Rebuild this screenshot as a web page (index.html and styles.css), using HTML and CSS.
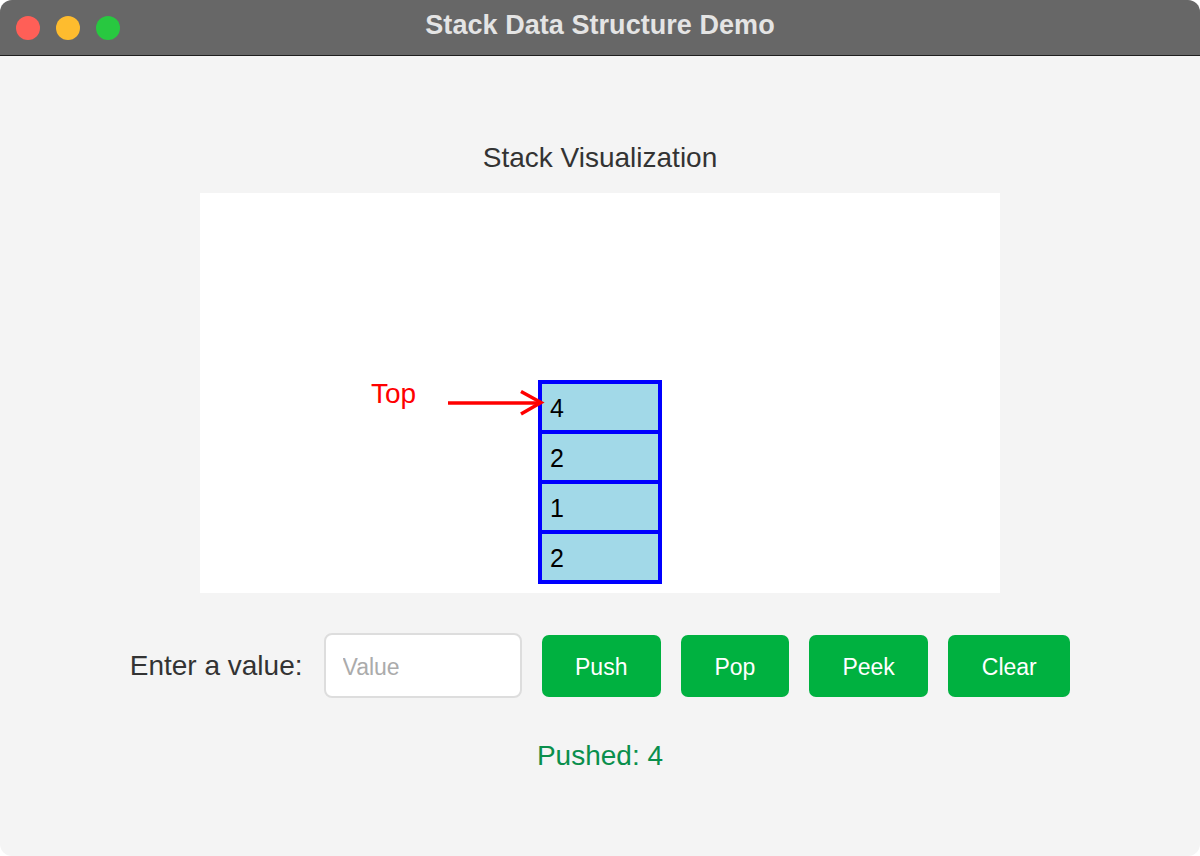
FILE: index.html
```html
<!DOCTYPE html>
<html lang="en">
<head>
<meta charset="utf-8">
<title>Stack Data Structure Demo</title>
<link rel="stylesheet" href="styles.css">
</head>
<body>
<div class="window">
  <header class="titlebar">
    <div class="lights">
      <span class="light light-red"></span>
      <span class="light light-yellow"></span>
      <span class="light light-green"></span>
    </div>
    <div class="window-title">Stack Data Structure Demo</div>
    <div></div>
  </header>
  <main class="content">
    <h1 class="viz-title">Stack Visualization</h1>
    <div class="canvas">
      <svg class="stack-svg" width="800" height="400" viewBox="0 0 800 400" xmlns="http://www.w3.org/2000/svg">
        <g class="cells">
          <rect x="340" y="189" width="120" height="50"/>
          <rect x="340" y="239" width="120" height="50"/>
          <rect x="340" y="289" width="120" height="50"/>
          <rect x="340" y="339" width="120" height="50"/>
        </g>
        <g class="cell-text">
          <text x="350" y="224">4</text>
          <text x="350" y="274">2</text>
          <text x="350" y="324">1</text>
          <text x="350" y="374">2</text>
        </g>
        <text class="top-label" x="171" y="210">Top</text>
        <g class="arrow">
          <line x1="248" y1="210" x2="340" y2="210"/>
          <polyline points="321,198.5 341,209.5 321,221"/>
        </g>
      </svg>
    </div>
    <div class="controls">
      <label class="value-label" for="value">Enter a value:</label>
      <input id="value" class="value-input" type="text" placeholder="Value">
      <button class="btn">Push</button>
      <button class="btn">Pop</button>
      <button class="btn">Peek</button>
      <button class="btn">Clear</button>
    </div>
    <p class="status">Pushed: 4</p>
  </main>
</div>
</body>
</html>
```

FILE: styles.css
```css
* { box-sizing: border-box; }

html, body {
  margin: 0;
  padding: 0;
  background: #ffffff;
}

body {
  font-family: "Liberation Sans", Arial, Helvetica, sans-serif;
  width: 1200px;
  height: 856px;
  overflow: hidden;
}

.window {
  width: 1200px;
  height: 856px;
  border-radius: 12px;
  overflow: hidden;
  background: #f4f4f4;
  display: flex;
  flex-direction: column;
}

.titlebar {
  height: 56px;
  flex: 0 0 56px;
  background: #676767;
  border-bottom: 1px solid #1f1f1f;
  display: grid;
  grid-template-columns: 1fr auto 1fr;
  align-items: center;
}

.lights {
  display: flex;
  gap: 16px;
  padding-left: 16px;
  align-items: center;
}

.light {
  width: 24px;
  height: 24px;
  border-radius: 50%;
  display: block;
}
.light-red { background: #ff5f57; }
.light-yellow { background: #febc2e; }
.light-green { background: #28c840; }

.window-title {
  color: #e4e4e4;
  font-weight: bold;
  font-size: 27px;
  letter-spacing: 0.05px;
  line-height: 32px;
  margin-top: -5px;
}

.content {
  flex: 1;
  display: flex;
  flex-direction: column;
  align-items: center;
  padding-top: 86px;
}

.viz-title {
  margin: 0;
  font-weight: normal;
  font-size: 28px;
  line-height: 32px;
  color: #333333;
}

.canvas {
  margin-top: 19px;
  width: 800px;
  height: 400px;
  background: #ffffff;
}

.stack-svg { display: block; }

.cells rect {
  fill: #a2d9e8;
  stroke: #0000ff;
  stroke-width: 4;
}

.cell-text text {
  font-family: "Liberation Sans", Arial, sans-serif;
  font-size: 25px;
  fill: #000000;
}

.top-label {
  font-family: "Liberation Sans", Arial, sans-serif;
  font-size: 28px;
  fill: #ff0000;
}

.arrow line,
.arrow polyline {
  stroke: #ff0000;
  stroke-width: 3.5;
  fill: none;
}

.controls {
  margin-top: 40px;
  height: 65px;
  display: flex;
  align-items: center;
  gap: 20px;
}

.value-label {
  font-size: 28px;
  color: #333333;
  margin-right: 1px;
}

.value-input {
  width: 198px;
  height: 65px;
  border: 2px solid #dddddd;
  border-radius: 8px;
  background: #ffffff;
  padding: 3px 0 0 17px;
  font-family: "Liberation Sans", Arial, sans-serif;
  font-size: 23px;
  color: #333333;
  outline: none;
}
.value-input::placeholder { color: #ababab; }

.btn {
  height: 62px;
  padding: 3px 33.5px 0 33.5px;
  border: none;
  border-radius: 7px;
  background: #00b140;
  color: #ffffff;
  font-family: "Liberation Sans", Arial, sans-serif;
  font-size: 23px;
  cursor: pointer;
}

.status {
  margin: 42px 0 0 0;
  font-size: 28px;
  line-height: 32px;
  color: #0a8f4c;
}
```
